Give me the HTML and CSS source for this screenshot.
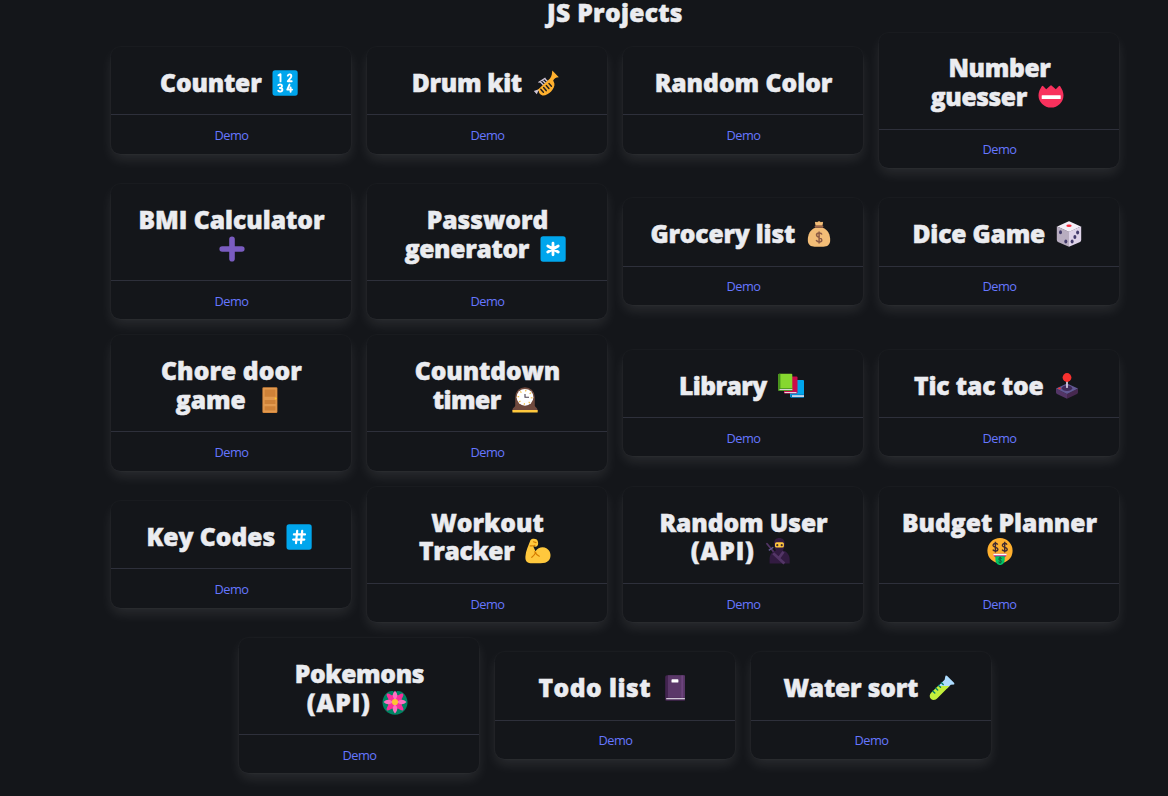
FILE: index.html
```html
<!DOCTYPE html>
<html lang="en">
<head>
<meta charset="utf-8">
<title>JS Projects</title>
<link rel="stylesheet" href="styles.css">
</head>
<body>
<main class="page">
<h1 class="title"><span>JS Projects</span></h1>
<section class="projects">
<article class="card"><h2 class="name"><span class="w1">Counter</span> <svg class="emoji" viewBox="0 0 26 26"><rect x=".5" y=".3" width="25.2" height="25.4" rx="2.6" fill="#00a6ed"/><g fill="none" stroke="#fff" stroke-width="1.9" stroke-linecap="round" stroke-linejoin="round"><path d="M6.5 5.3 8.5 4.2V11.4M15.8 5.7C16.4 3.8 19.6 3.8 19.3 6.4 19.2 8 16.8 9.6 15.8 11.2H19.7M6.3 15.1C8 13.6 10.7 14.6 9.8 16.7 9.5 17.6 8.6 18 7.8 18 11.4 18 11 21.6 8.3 21.6 7.3 21.6 6.6 21.2 6.2 20.7M17.5 14.6 15.3 19.6H20.2M18.6 17.4V21.8"/></g></svg></h2><a class="demo" href="#">Demo</a></article>
<article class="card"><h2 class="name"><span class="w2">Drum kit</span> <svg class="emoji" viewBox="0 0 26 26"><path d="M5.5 12.5 12.5 8M7 11.5l4 4M9.2 10l4 4M11.5 8.5l4 4" stroke="#cdc4d6" stroke-width="1.4"/><path d="M.8 21 3.8 24.3 5 21.6 8 18.5" fill="#cdc4d6"/><path d="M4.3 20.3 17 8.5C19 6.4 19 2.5 19.3.6L25.8 7.2C22.5 7.4 21.2 8.7 20.2 10.5L21.4 13.5C22.3 19 15 26 9.5 25.4 6.5 24.8 5.3 22.2 6 20.5Z" fill="#ffb02e"/><path d="M7.9 19.4 10.4 22.2M10.6 17.6 13.2 20.6M13.3 15.6 15.9 18.5M16 13.6 18.4 16.2" stroke="#24211e" stroke-width="1.5" stroke-linecap="round"/></svg></h2><a class="demo" href="#">Demo</a></article>
<article class="card"><h2 class="name"><span class="w3">Random Color</span></h2><a class="demo" href="#">Demo</a></article>
<article class="card"><h2 class="name"><span class="w4">Number</span><br><span class="w5">guesser</span> <svg class="emoji" viewBox="0 0 26 26"><path d="M3.8 2.2Q4.5 1.4 5.3 2.2L8.2 5.2 12.2 1.7Q13 1 13.8 1.7L17.8 5.2 20.7 2.2Q21.5 1.4 22.2 2.2C24 5 25.5 8 25.5 11.2A12.5 12.3 0 0 1 .5 11.2C.5 8 2 5 3.8 2.2Z" fill="#f8315d"/><rect x="3.7" y="11.3" width="19" height="3.7" rx=".5" fill="#fff"/></svg></h2><a class="demo" href="#">Demo</a></article>
<article class="card"><h2 class="name"><span class="w6">BMI Calculator</span><br><svg class="emoji" viewBox="0 0 26 26"><path d="M13 3.2V22.8M3.2 13H22.8" stroke="#7a5cc0" stroke-width="5.6" stroke-linecap="round"/></svg></h2><a class="demo" href="#">Demo</a></article>
<article class="card"><h2 class="name"><span class="w7">Password</span><br><span class="w8">generator</span> <svg class="emoji" viewBox="0 0 26 26"><rect x=".5" y=".3" width="25.2" height="25.4" rx="2.6" fill="#00a6ed"/><path d="M13 7.2V18.8M7.8 10 18.2 16M18.2 10 7.8 16" stroke="#fff" stroke-width="2.8" stroke-linecap="round"/></svg></h2><a class="demo" href="#">Demo</a></article>
<article class="card"><h2 class="name"><span class="w9">Grocery list</span> <svg class="emoji" viewBox="0 0 26 26"><path d="M9.6 4.8 8.9 1.5Q9.5.3 11.1 1.2 13 -.7 14.9 1.2 16.5.3 17.1 1.5L16.4 4.8Z" fill="#f3bd77"/><path d="M9.4 6.8C4 8.5 1.8 14 1.8 19 1.8 24 5 25.7 8.6 25.7H17.4C21 25.7 24.2 24 24.2 19 24.2 14 22 8.5 16.6 6.8Z" fill="#f3bd77"/><rect x="8.6" y="4.5" width="8.8" height="2.3" rx="1" fill="#9c6549"/><path d="M15.9 13.5C15.2 11.2 10.5 11.4 10.5 14 10.5 17 15.8 15.9 15.8 19 15.8 21.6 11 21.6 10.2 19M13.1 10.6V22.6" fill="none" stroke="#8d5b45" stroke-width="1.5"/></svg></h2><a class="demo" href="#">Demo</a></article>
<article class="card"><h2 class="name"><span class="w10">Dice Game</span> <svg class="emoji" viewBox="0 0 26 26"><path d="M12.2.4Q13 .1 13.8.4L24.8 5.4 13 11 1.2 5.4Z" fill="#f3eef8"/><path d="M.8 5.2 13 10.8V25.8L1.9 20.9Q.8 20.3.8 19Z" fill="#b8adc0"/><path d="M25.2 5.2 13 10.8V25.8L24.1 20.9Q25.2 20.3 25.2 19Z" fill="#ded3e8"/><ellipse cx="13" cy="4.7" rx="2.7" ry="1.3" fill="#f82f3f"/><g fill="#433b6b"><ellipse cx="4.5" cy="11.3" rx="1.5" ry="2"/><ellipse cx="9.8" cy="20.4" rx="1.5" ry="2"/><ellipse cx="21.6" cy="11.4" rx="1.5" ry="2"/><ellipse cx="18.9" cy="15.9" rx="1.5" ry="2"/><ellipse cx="16.1" cy="20.5" rx="1.5" ry="2"/></g></svg></h2><a class="demo" href="#">Demo</a></article>
<article class="card"><h2 class="name"><span class="w11">Chore door</span><br><span class="w12">game</span> <svg class="emoji" viewBox="0 0 26 26"><rect x="5.4" y=".2" width="15" height="25.7" rx="1.2" fill="#d6883c"/><rect x="6.2" y="1" width="13.4" height="24" rx=".6" fill="#e39a4f"/><path d="M7.6 2.4H18.5V9.8H7.6ZM7.6 13H18.5V17H7.6ZM7.6 19.2H18.5V23.5H7.6Z" fill="#cf8238"/><circle cx="18.7" cy="11.6" r="1" fill="#ffc928"/></svg></h2><a class="demo" href="#">Demo</a></article>
<article class="card"><h2 class="name"><span class="w13">Countdown</span><br><span class="w14">timer</span> <svg class="emoji" viewBox="0 0 26 26"><path d="M3.2 10A9.8 9.8 0 0 1 22.8 10V18.5C22.8 20.3 25.5 20.5 25.5 23V24H.5V23C.5 20.5 3.2 20.3 3.2 18.5Z" fill="#704a3e"/><circle cx="13" cy="10.3" r="8.4" fill="#fff"/><circle cx="13" cy="10.3" r="6.7" fill="none" stroke="#f5bd45" stroke-width="1.7" stroke-dasharray="1.2 4.06"/><path d="M13 7V10.3H17" fill="none" stroke="#4b4052" stroke-width="1.1"/><rect x=".4" y="22.9" width="25.3" height="2.6" rx=".5" fill="#ffc83d"/></svg></h2><a class="demo" href="#">Demo</a></article>
<article class="card"><h2 class="name"><span class="w15">Library</span> <svg class="emoji" viewBox="0 0 26 26"><rect x="12" y="7" width="14" height="17.5" rx="1" fill="#00a6ed"/><path d="M12.6 21.5H26V24.5H13.2Q12 23 12.6 21.5Z" fill="#0074ba"/><path d="M14 22.3H26V23.8H14Z" fill="#f3eef8"/><rect x="6" y="3.5" width="13.5" height="17" rx="1" fill="#ca0b4a"/><path d="M6.5 19H18.5V20.1H6.5Z" fill="#e6d5df"/><rect x=".3" y=".7" width="14" height="17.4" rx="1" fill="#86d72f"/><path d="M.3 2Q.3.7 1.6.7H2.4V15.3H14.3V17.9H1.2Q.3 17.5.3 16Z" fill="#44911b"/><path d="M1.5 16H14.3V17.1H1.5Z" fill="#d3d3d3"/></svg></h2><a class="demo" href="#">Demo</a></article>
<article class="card"><h2 class="name"><span class="w16">Tic tac toe</span> <svg class="emoji" viewBox="0 0 26 26"><path d="M2 15.5 13 21V25.7L3 21Q2 20.4 2 19.5Z" fill="#533566"/><path d="M24 15.5 13 21V25.7L23 21Q24 20.4 24 19.5Z" fill="#46284f"/><path d="M13 10.4 24 15.5 13 21 2 15.5Z" fill="#635994"/><ellipse cx="13" cy="15.3" rx="5.2" ry="2.8" fill="#402a58"/><path d="M13 7V14.2" stroke="#d3c9de" stroke-width="1.8" stroke-linecap="round"/><circle cx="13" cy="4.5" r="4.4" fill="#f8312f"/><ellipse cx="5.5" cy="15.4" rx="1.5" ry=".8" fill="#f8312f"/></svg></h2><a class="demo" href="#">Demo</a></article>
<article class="card"><h2 class="name"><span class="w17">Key Codes</span> <svg class="emoji" viewBox="0 0 26 26"><rect x=".5" y=".3" width="25.2" height="25.4" rx="2.6" fill="#00a6ed"/><path d="M11.2 6.8 10 19.2M16.2 6.8 15 19.2M7.9 10.4H19M7.2 15.6H18.3" stroke="#fff" stroke-width="2.2" stroke-linecap="round"/></svg></h2><a class="demo" href="#">Demo</a></article>
<article class="card"><h2 class="name"><span class="w18">Workout</span><br><span class="w19">Tracker</span> <svg class="emoji" viewBox="0 0 26 26"><path d="M5.4 2.3C7.3 0 11.9.4 12.8 3.2 13.7 5.7 13 8 11 8.7L8.2 8.3 10.5 13.3C13 9.2 18 8 21.8 10.4 26.2 13.2 26.6 19.3 23.7 22.5 21.8 24.6 19 25.2 15.6 25.2H5.5C1.5 25.2.2 22.5.4 18.6.7 12.5 3.5 7.8 5.4 2.3Z" fill="#ffc83d"/><path d="M5.2 7.8C7 8.2 8.3 8 10 7.3M8.5 3.8 11 4.6M9.7 13.8C10.7 16.1 12.4 17.2 14.3 18.2M10.8 14.5C9.7 16.6 8.4 18 6.8 19.3" fill="none" stroke="#d67d00" stroke-width="1.2" stroke-linecap="round"/></svg></h2><a class="demo" href="#">Demo</a></article>
<article class="card"><h2 class="name"><span class="w20">Random User</span><br><span class="w21">(API)</span> <svg class="emoji" viewBox="0 0 26 26"><path d="M1 5.7 8.2 14.5" stroke="#533566" stroke-width="1.8" stroke-linecap="round"/><path d="M2.8 12.4 7.3 9.2" stroke="#635994" stroke-width="1.4"/><path d="M8 6C8 2 10 0 13.3 0 16.8 0 18.8 2 18.8 6 18.8 9.7 17.2 11.4 16.7 12.4 21 13.2 23.7 17 23.7 21.2V25.6H3.6V21.5C3.6 16.5 6 13.5 10.1 12.4 9 11 8 9 8 6Z" fill="#321b41"/><rect x="9" y="4.2" width="8.9" height="5.4" rx="1.6" fill="#ffc83d"/><circle cx="11.3" cy="7.2" r="1.1" fill="#402a32"/><circle cx="15.7" cy="7.2" r="1.1" fill="#402a32"/><path d="M7.2 15.2 18.4 25.6M17.5 13.7 13 20" stroke="#533566" stroke-width="2.7"/></svg></h2><a class="demo" href="#">Demo</a></article>
<article class="card"><h2 class="name"><span class="w22">Budget Planner</span><br><svg class="emoji" viewBox="0 0 26 26"><circle cx="13" cy="12.7" r="12.6" fill="#ffb02e"/><g fill="none" stroke="#402a32" stroke-width="1.4"><path d="M10.7 6.6C9.4 4.4 5.5 5.3 6.2 7.9 6.8 9.8 10.7 8.9 10.9 11.1 11 13.5 7 13.8 5.8 11.7M8.4 3.7V14.5M20 6.6C18.7 4.4 14.8 5.3 15.5 7.9 16.1 9.8 20 8.9 20.2 11.1 20.3 13.5 16.3 13.8 15.1 11.7M17.7 3.7V14.5"/></g><path d="M6.4 15.8H19.6C19.7 19 17 20.3 13 20.3 9 20.3 6.3 19 6.4 15.8Z" fill="#bb1d80"/><path d="M6.4 15.8H19.6V17.3H6.4Z" fill="#fff"/><path d="M8.4 18.2H17.7V21.5C17.7 24.8 15.5 27 13 27 10.6 27 8.4 24.8 8.4 21.5Z" fill="#00c565"/><path d="M14.7 20.6C13.8 19.3 11.5 19.7 11.7 21.2 12 22.5 14.6 22 14.6 23.5 14.6 25 12.2 25 11.4 23.8M13.1 18.8V25.7" fill="none" stroke="#16583b" stroke-width="1"/></svg></h2><a class="demo" href="#">Demo</a></article>
<article class="card"><h2 class="name"><span class="w23">Pokemons</span><br><span class="w21">(API)</span> <svg class="emoji" viewBox="0 0 26 26"><path d="M7 1.5C10 .3 11.5 1 13 2.4 14.5 1 16 .3 19 1.5A12.5 12.4 0 1 1 7 1.5Z" fill="#008463"/><g fill="#f92f9c"><ellipse cx="13" cy="12" rx="3.2" ry="11.5" transform="rotate(45 13 12)"/><ellipse cx="13" cy="12" rx="3.2" ry="11.5" transform="rotate(-45 13 12)"/><circle cx="13" cy="12" r="7.2"/></g><path d="M13 .8C16 4 16 6.5 13 10 10 6.5 10 4 13 .8ZM13 14C16 17.5 16 20 13 23.4 10 20 10 17.5 13 14ZM1.6 12C4.8 9 7.5 9 11 12 7.5 15 4.8 15 1.6 12ZM15 12C18.5 9 21.2 9 24.4 12 21.2 15 18.5 15 15 12Z" fill="#ff70c3"/><circle cx="13" cy="12" r="3.1" fill="#fcc434"/></svg></h2><a class="demo" href="#">Demo</a></article>
<article class="card"><h2 class="name"><span class="w24">Todo list</span> <svg class="emoji" viewBox="0 0 26 26"><path d="M3.2 2Q3.2.2 5 .2H22Q22.9.2 22.9 1.2V25.8H4.6Q3.2 25.8 3.2 24.2Z" fill="#432450"/><path d="M6 .2H22Q22.9.2 22.9 1.2V22.8H6Z" fill="#5b3869"/><path d="M4.2 23.1H22.9V24.3H4.2Z" fill="#e3dce8"/><path d="M20.1.4V22.8" stroke="#7b4d8b" stroke-width="1"/><rect x="9.5" y="4.2" width="6.9" height="3.4" rx=".7" fill="#fff"/></svg></h2><a class="demo" href="#">Demo</a></article>
<article class="card"><h2 class="name"><span class="w25">Water sort</span> <svg class="emoji" viewBox="0 0 26 26"><path d="M16.5.8Q17.4.2 18.2 1L25 7.8Q25.8 8.7 25.1 9.5L21.8 9.8 18 13.5 9.3 11 15.6 4.7Z" fill="#aeddff"/><path d="M9 11H20.5L8.6 23C6.9 25 4 25.6 2 23.9 0 22 .4 19.3 2.4 17.4Z" fill="#c3ef3c"/><path d="M3.9 16.2 5.8 18M6.8 13.3 8.7 15.1M9.6 10.5 11.5 12.3M12.4 7.7 14.2 9.5" stroke="#00806a" stroke-width="1.4" stroke-linecap="round"/></svg></h2><a class="demo" href="#">Demo</a></article>
</section>
</main>
</body>
</html>
```
FILE: styles.css
```css
body {
  margin: 0;
  background: #14161a;
  color: #ebecf0;
  font: 12.8px/19.2px "Open Sans", sans-serif;
}
.page {
  display: flow-root;
  box-sizing: border-box;
  height: 796px;
  padding: 0 49px 0 111px;
}
.title,
.name {
  font: 800 24.6px/28.8px "Open Sans", sans-serif;
  text-align: center;
  white-space: nowrap;
  -webkit-text-stroke: .5px #ebecf0;
}
.title {
  margin: -1.4px 0 5.2px;
  letter-spacing: .3px;
}
.projects {
  display: flex;
  flex-wrap: wrap;
  justify-content: center;
  align-items: center;
  gap: 16px;
}
.card {
  width: 240px;
  border-radius: 9.6px;
  background: #14161a;
  box-shadow: 0 6.4px 12.8px -1.6px rgba(255, 255, 255, .1), 0 0 0 1px rgba(255, 255, 255, .02);
}
.name {
  margin: 0;
  padding: 21.8px 0 16.6px 1px;
}
/* optical tracking per heading */
.w1, .w9, .w10, .w25 { letter-spacing: -.18px; }
.w2, .w4, .w8, .w19, .w23 { letter-spacing: -.32px; }
.w5 { letter-spacing: -.4px; }
.w11 { letter-spacing: .1px; }
.w13, .w16, .w20 { letter-spacing: -.1px; }
.w14, .w15 { letter-spacing: -.55px; }
.w21 { letter-spacing: .85px; }
.w24 { letter-spacing: .5px; }
.emoji {
  width: 26px;
  height: 26px;
  margin: 0 4.5px;
  vertical-align: -4px;
  overflow: visible;
  -webkit-text-stroke: 0;
}
.demo {
  display: block;
  padding: 10.8px 9px 8.4px 10px;
  border-top: 1px solid #2e303b;
  color: #6677ff;
  letter-spacing: -.5px;
  text-align: center;
  text-decoration: none;
}
```
